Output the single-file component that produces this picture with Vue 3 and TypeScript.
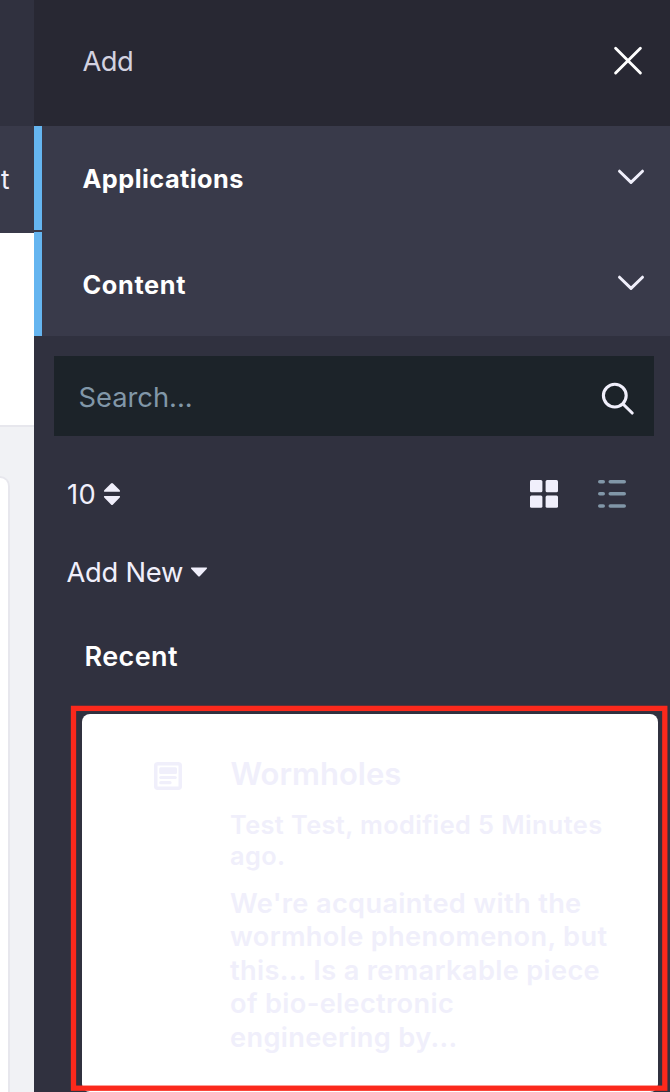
<script setup lang="ts">
const sections: { name: string; key: string }[] = [
  { name: 'Applications', key: 'applications' },
  { name: 'Content', key: 'content' },
]

const card = {
  title: 'Wormholes',
  meta: ['Test Test, modified 5 Minutes', 'ago.'],
  summary: [
    "We're acquainted with the",
    'wormhole phenomenon, but',
    'this... Is a remarkable piece',
    'of bio-electronic',
    'engineering by...',
  ],
}
</script>

<template>
  <div class="screen">
    <div class="page">
      <div class="page-top"></div>
      <div class="page-nav"><span>t</span></div>
      <div class="page-toolbar"></div>
      <div class="page-body"><div class="page-sheet"></div></div>
    </div>

    <aside class="panel">
      <header class="panel-header">
        <span class="add-title">Add</span>
        <svg class="close" width="30" height="30" viewBox="0 0 30 30">
          <path d="M2.6 2.2 27.4 27M27.4 2.2 2.6 27" />
        </svg>
      </header>

      <div class="sections">
        <div v-for="s in sections" :key="s.key" class="section">
          <span :class="['section-name', s.key]">{{ s.name }}</span>
          <svg class="chevron" width="28" height="16" viewBox="0 0 28 16">
            <path d="M2.5 2.2 14 13.4 25.5 2.2" />
          </svg>
        </div>
      </div>

      <div class="search">
        <span class="placeholder">Search...</span>
        <svg width="34" height="34" viewBox="0 0 34 34">
          <circle cx="13.8" cy="13.6" r="11.4" />
          <path d="M22 22 31.2 31" />
        </svg>
      </div>

      <div class="toolbar">
        <span class="count">10</span>
        <svg class="sort" width="18" height="24" viewBox="0 0 18 24">
          <path d="M8 1.4Q9 .4 10 1.4L16.8 8.2Q17.6 9.8 16.4 9.8H1.6Q.4 9.8 1.2 8.2ZM8 22.6Q9 23.6 10 22.6L16.8 15.4Q17.6 14 16.4 14H1.6Q.4 14 1.2 15.4Z" />
        </svg>
        <svg class="grid-icon" width="28" height="28" viewBox="0 0 28 28">
          <rect width="12.4" height="12.3" rx="1.5" />
          <rect x="15.6" width="12.4" height="12.3" rx="1.5" />
          <rect y="15.4" width="12.4" height="12.4" rx="1.5" />
          <rect x="15.6" y="15.4" width="12.4" height="12.4" rx="1.5" />
        </svg>
        <svg class="list-icon" width="28" height="28" viewBox="0 0 28 28">
          <g v-for="y in [0, 12.1, 24.2]" :key="y">
            <rect :y="y" width="7" height="3.5" rx="1.75" />
            <rect x="10.5" :y="y" width="17.5" height="3.5" rx="1.75" />
          </g>
        </svg>
      </div>

      <div class="add-new">
        <span>Add New</span>
        <svg width="18" height="10" viewBox="0 0 18 10">
          <path d="M1.6.4H16.4Q17.6.4 16.8 1.8L10 9Q9 10 8 9L1.2 1.8Q.4.4 1.6.4Z" />
        </svg>
      </div>

      <h2 class="recent">Recent</h2>

      <article class="card">
        <svg class="card-icon" width="28" height="28" viewBox="0 0 28 28">
          <rect x="1.75" y="1.75" width="24.5" height="24.5" rx="2" class="outline" />
          <rect x="5.2" y="5.2" width="17.8" height="6.8" rx="1.5" />
          <rect x="5.2" y="13.9" width="17.6" height="3.2" rx="1.6" />
          <rect x="5.2" y="19" width="12.4" height="3.3" rx="1.6" />
        </svg>
        <div class="card-text">
          <h3>{{ card.title }}</h3>
          <p class="meta"><span v-for="l in card.meta" :key="l">{{ l }}</span></p>
          <p class="summary"><span v-for="l in card.summary" :key="l">{{ l }}</span></p>
        </div>
        <svg class="highlight" width="600" height="387" viewBox="0 0 600 387">
          <rect x="3.5" y="3.4" width="591.3" height="379.8" />
        </svg>
      </article>
    </aside>
  </div>
</template>

<style>
body {
  overflow: hidden;
}
</style>

<style scoped>
.screen {
  display: flex;
  width: 670px;
  height: 1092px;
  overflow: hidden;
  font-family: Inter, 'Liberation Sans', sans-serif;
  font-size: 27.3px;
  color: #f0effb;
  background: #30313f;
}
.screen * {
  box-sizing: border-box;
}
svg {
  display: block;
  flex: none;
}
span {
  white-space: nowrap;
}
.page {
  width: 34px;
  flex: none;
  display: flex;
  flex-direction: column;
  overflow: hidden;
}
.page-top {
  flex: none;
  height: 126px;
  background: #30313f;
}
.page-nav {
  flex: none;
  height: 107px;
  padding-left: 1px;
  background: #393a4a;
  line-height: 107px;
  font-size: 26px;
}
.page-toolbar {
  flex: none;
  height: 194px;
  background: #fff;
  border-bottom: 2px solid #e7e7ed;
}
.page-body {
  flex: none;
  height: 665px;
  background: #f1f2f5;
  padding-top: 49px;
}
.page-sheet {
  width: 10px;
  height: 640px;
  background: #fff;
  border: 2px solid #e7e7ed;
  border-left: 0;
  border-top-right-radius: 16px;
}
.panel {
  width: 636px;
  flex: none;
  background: #30313f;
}
.panel-header {
  height: 126px;
  display: flex;
  align-items: center;
  justify-content: space-between;
  padding: 0 27px 5px 48px;
  background: #282833;
  color: #d3d2e0;
}
.add-title {
  letter-spacing: -0.5px;
  padding: 1px 0 0 0.5px;
}
.close {
  fill: none;
  stroke: #fff;
  stroke-width: 2.9;
  stroke-linecap: round;
}
.sections {
  display: flex;
  flex-direction: column;
  gap: 2px;
  background: #393a4a;
}
.section {
  height: 104px;
  display: flex;
  align-items: center;
  justify-content: space-between;
  padding: 1px 25px 0 40px;
  border-left: 8px solid #65b5f0;
  color: #fff;
  font-size: 25.3px;
  font-weight: 700;
}
.section-name {
  padding-left: 0.5px;
}
.applications {
  letter-spacing: 0.46px;
}
.content {
  letter-spacing: 0.65px;
}
.chevron {
  fill: none;
  stroke: #f0effb;
  stroke-width: 3;
  stroke-linecap: round;
  stroke-linejoin: round;
  margin-bottom: 3px;
}
.search {
  margin: 20px 16px 0 20px;
  height: 80px;
  display: flex;
  align-items: center;
  justify-content: space-between;
  padding: 0 19px 0 24px;
  background: #1c2329;
}
.search svg {
  fill: none;
  stroke: #f0effb;
  stroke-width: 3.1;
  stroke-linecap: round;
  margin-top: 5px;
}
.placeholder {
  color: #8197a8;
  padding: 2px 0 0 0.5px;
}
.toolbar {
  height: 34px;
  margin: 41px 44px 0 32px;
  display: flex;
  align-items: center;
}
.count {
  width: 31px;
  padding: 0 0 0 1px;
  letter-spacing: 0.5px;
}
.sort {
  fill: #f0effb;
  margin-left: 6px;
}
.grid-icon {
  fill: #f0effb;
  margin-left: auto;
}
.list-icon {
  fill: #8197a8;
  margin-left: 40px;
}
.add-new {
  height: 34px;
  margin: 44px 0 0 32px;
  display: flex;
  align-items: center;
}
.add-new span {
  width: 117px;
  letter-spacing: -0.24px;
  padding: 0 0 0 0.5px;
}
.add-new svg {
  fill: #f0effb;
  margin: 0 0 0 7px;
}
.recent {
  margin: 51px 0 0 50.5px;
  font-size: 27px;
  font-weight: 600;
  line-height: 34px;
  letter-spacing: 0.4px;
  color: #fff;
}
.card {
  position: relative;
  margin: 40px 0 0 48px;
  width: 576px;
  height: 378px;
  border-radius: 8px;
  background: #fff;
  display: flex;
  padding: 40px 0 0 72px;
  gap: 48px;
}
.card-icon {
  fill: #f0effb;
  margin-top: 8px;
}
.outline {
  fill: none;
  stroke: #f0effb;
  stroke-width: 3.5;
}
.card-text span {
  display: block;
}
h3 {
  margin: 0 0 0 0.5px;
  font-size: 31px;
  font-weight: 600;
  line-height: 39px;
  letter-spacing: 0;
}
p {
  margin: 0;
  font-weight: 600;
}
.meta {
  margin-top: 15.5px;
  font-size: 25.3px;
  line-height: 31.2px;
  letter-spacing: 0.42px;
}
.summary {
  margin-top: 16px;
  font-size: 27.2px;
  line-height: 33.5px;
  letter-spacing: 0.34px;
}
.highlight {
  position: absolute;
  left: -12px;
  top: -9px;
  fill: none;
  stroke: #fb291c;
  stroke-width: 5.3;
}
</style>
